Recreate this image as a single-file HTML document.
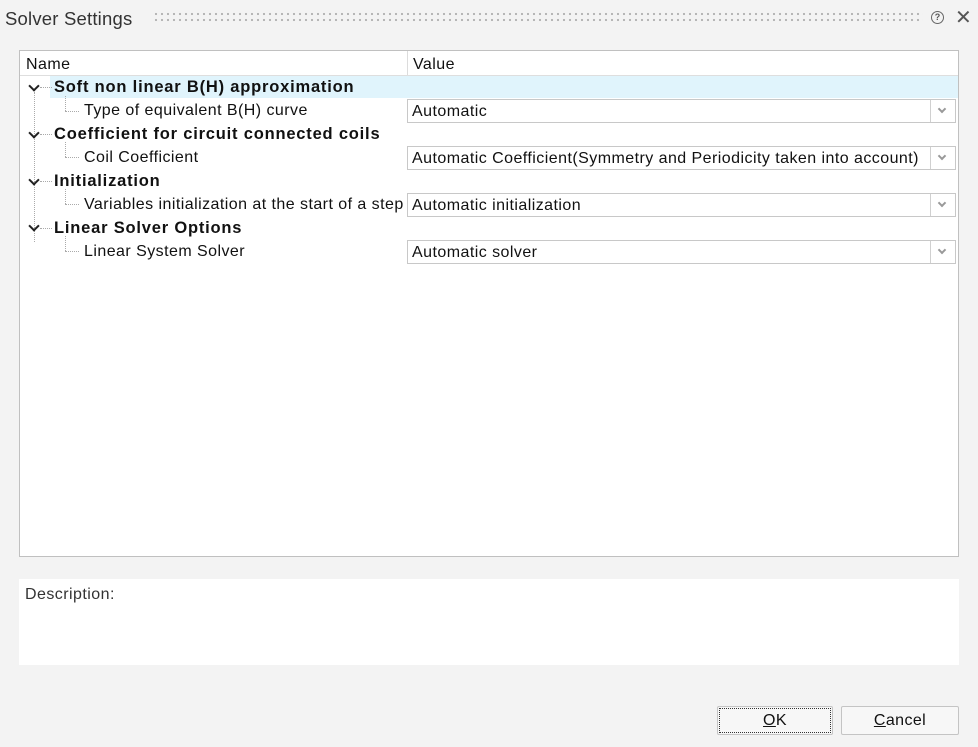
<!DOCTYPE html>
<html><head><style>
body{margin:0;width:978px;height:747px;background:#f3f3f3;font-family:"Liberation Sans",sans-serif;position:relative;overflow:hidden;color:#111}
.a{position:absolute}
.t{font-size:16px;letter-spacing:0.45px;white-space:nowrap}
.b{font-weight:bold;font-size:16.5px;letter-spacing:0.8px}
.combo{position:absolute;left:407px;width:549px;height:24px;background:#fff;border:1px solid #c8c8c8;box-sizing:border-box}
.combo span{position:absolute;left:4px;top:3px;font-size:16px;letter-spacing:0.45px;white-space:nowrap}
.combo i{position:absolute;right:0;top:0;width:24px;height:22px;border-left:1px solid #d0d0d0}
.combo i:after{content:"";position:absolute;left:8px;top:6px;width:4px;height:4px;border-right:2px solid #999;border-bottom:2px solid #999;transform:rotate(45deg)}
.chev{position:absolute;left:30px;width:6px;height:6px;border-right:2px solid #222;border-bottom:2px solid #222;transform:rotate(45deg)}
.dv{position:absolute;border-left:1px dotted #aaa}
.dh{position:absolute;border-top:1px dotted #aaa}
.btn{position:absolute;height:29px;background:#f7f7f7;border:1px solid #c4c4c4;box-sizing:border-box;font-size:16px;letter-spacing:0.4px;text-align:center;line-height:27px;border-radius:2px}
</style></head><body>
<div class="a" style="left:5px;top:8px;font-size:18.5px;letter-spacing:0.2px;color:#333">Solver Settings</div>
<div class="a" style="left:153px;top:11px;width:770px;height:12px;background-image:radial-gradient(circle,#b0b0b0 0.9px,transparent 1.3px);background-size:6px 6px"></div>
<div class="a" style="left:931px;top:11px;width:11px;height:11px;border:1.5px solid #666;border-radius:50%;font-size:9px;line-height:11px;text-align:center;color:#555;font-weight:bold">?</div>
<div class="a" style="left:955px;top:5px;font-size:20px;color:#555">✕</div>

<div class="a" style="left:19px;top:50px;width:940px;height:507px;background:#fff;border:1px solid #c0c0c0;box-sizing:border-box"></div>
<div class="a" style="left:20px;top:51px;width:938px;height:24px;background:#fff;border-bottom:1px solid #dedede"></div>
<div class="a" style="left:407px;top:51px;height:24px;border-left:1px solid #dcdcdc"></div>
<div class="a t" style="left:26px;top:56px">Name</div>
<div class="a t" style="left:413px;top:56px">Value</div>
<div class="a" style="left:50px;top:76px;width:908px;height:22px;background:#e0f4fc"></div>

<div class="dv" style="left:34px;top:92px;height:150px"></div>
<div class="dv" style="left:65px;top:96px;height:15px"></div><div class="dh" style="left:65px;top:111px;width:14px"></div>
<div class="dv" style="left:65px;top:142px;height:15px"></div><div class="dh" style="left:65px;top:157px;width:14px"></div>
<div class="dv" style="left:65px;top:189px;height:15px"></div><div class="dh" style="left:65px;top:204px;width:14px"></div>
<div class="dv" style="left:65px;top:236px;height:15px"></div><div class="dh" style="left:65px;top:251px;width:14px"></div>
<div class="dh" style="left:40px;top:87px;width:12px"></div>
<div class="dh" style="left:40px;top:134px;width:12px"></div>
<div class="dh" style="left:40px;top:181px;width:12px"></div>
<div class="dh" style="left:40px;top:228px;width:12px"></div>

<div class="chev" style="top:82px"></div>
<div class="chev" style="top:129px"></div>
<div class="chev" style="top:176px"></div>
<div class="chev" style="top:222px"></div>

<div class="a t b" style="left:54px;top:78px">Soft non linear B(H) approximation</div>
<div class="a t" style="left:84px;top:102px">Type of equivalent B(H) curve</div>
<div class="a t b" style="left:54px;top:125px">Coefficient for circuit connected coils</div>
<div class="a t" style="left:84px;top:149px">Coil Coefficient</div>
<div class="a t b" style="left:54px;top:172px">Initialization</div>
<div class="a t" style="left:84px;top:196px">Variables initialization at the start of a step</div>
<div class="a t b" style="left:54px;top:219px">Linear Solver Options</div>
<div class="a t" style="left:84px;top:243px">Linear System Solver</div>

<div class="combo" style="top:99px"><span>Automatic</span><i></i></div>
<div class="combo" style="top:146px"><span>Automatic Coefficient(Symmetry and Periodicity taken into account)</span><i></i></div>
<div class="combo" style="top:193px"><span>Automatic initialization</span><i></i></div>
<div class="combo" style="top:240px"><span>Automatic solver</span><i></i></div>

<div class="a" style="left:19px;top:579px;width:940px;height:86px;background:#fff"></div>
<div class="a t" style="left:25px;top:586px;color:#333">Description:</div>

<div class="btn" style="left:717px;top:706px;width:116px;outline:1px dotted #333;outline-offset:-3px"><u>O</u>K</div>
<div class="btn" style="left:841px;top:706px;width:118px"><u>C</u>ancel</div>
</body></html>
